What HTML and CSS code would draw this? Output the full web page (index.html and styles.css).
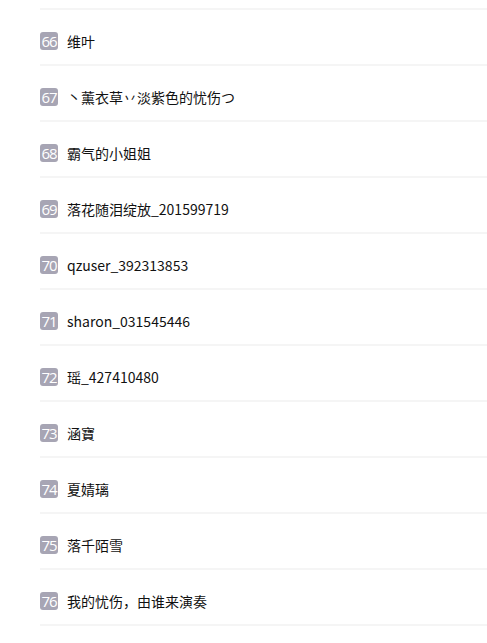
FILE: index.html
```html
<!DOCTYPE html>
<html>
<head>
<meta charset="utf-8">
<link rel="stylesheet" href="styles.css">
</head>
<body>
<ul class="list">
  <li class="item"><span class="badge">66</span><span class="name">维叶</span></li>
  <li class="item"><span class="badge">67</span><span class="name">丶薰衣草丷淡紫色的忧伤つ</span></li>
  <li class="item"><span class="badge">68</span><span class="name">霸气的小姐姐</span></li>
  <li class="item"><span class="badge">69</span><span class="name">落花随泪绽放_201599719</span></li>
  <li class="item"><span class="badge">70</span><span class="name">qzuser_392313853</span></li>
  <li class="item"><span class="badge">71</span><span class="name">sharon_031545446</span></li>
  <li class="item"><span class="badge">72</span><span class="name">瑶_427410480</span></li>
  <li class="item"><span class="badge">73</span><span class="name">涵寶</span></li>
  <li class="item"><span class="badge">74</span><span class="name">夏婧璃</span></li>
  <li class="item"><span class="badge">75</span><span class="name">落千陌雪</span></li>
  <li class="item"><span class="badge">76</span><span class="name">我的忧伤，由谁来演奏</span></li>
</ul>
</body>
</html>
```
FILE: styles.css
```css
html, body {
  margin: 0;
  padding: 0;
  background: #ffffff;
}
body {
  font-family: "Noto Sans CJK SC", "Open Sans", sans-serif;
  color: #111111;
}
.list {
  list-style: none;
  margin: 8px 0 0 0;
  padding: 0 0 0 40px;
}
.item {
  display: flex;
  align-items: center;
  gap: 9px;
  height: 18px;
  padding: 22px 0 14px 0;
  border-top: 2px solid #f5f5f5;
}
.item:last-child {
  border-bottom: 2px solid #f5f5f5;
}
.badge {
  width: 18px;
  height: 18px;
  border-radius: 3px;
  background: #a7a5b4;
  color: #ffffff;
  font-size: 15px;
  letter-spacing: -1px;
  line-height: 18px;
  text-align: center;
  font-family: "Open Sans", "Noto Sans", sans-serif;
  flex: none;
}
.name {
  font-size: 14px;
  line-height: 18px;
  margin-top: -1px;
}
```
